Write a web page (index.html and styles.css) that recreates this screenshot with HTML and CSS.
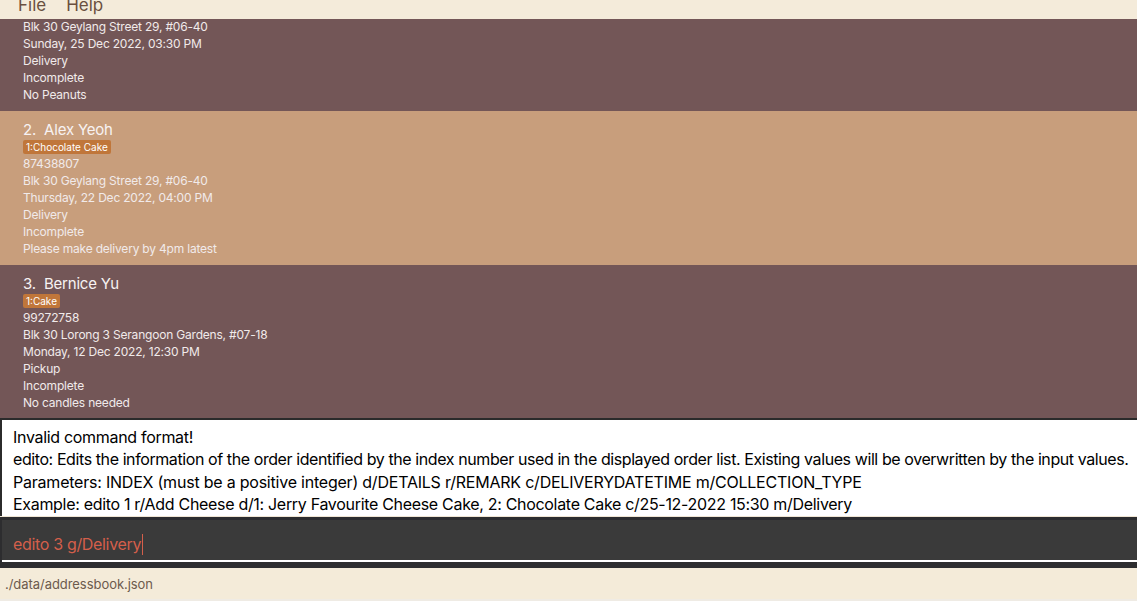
FILE: index.html
```html
<!DOCTYPE html>
<html>
<head>
<meta charset="utf-8">
<link rel="stylesheet" href="styles.css">
</head>
<body>
<div class="app">
  <div class="menubar">
    <span class="menu-item">File</span>
    <span class="menu-item">Help</span>
  </div>
  <div class="list">
    <div class="card odd first">
      <div class="line">Blk 30 Geylang Street 29, #06-40</div>
      <div class="line">Sunday, 25 Dec 2022, 03:30 PM</div>
      <div class="line">Delivery</div>
      <div class="line">Incomplete</div>
      <div class="line">No Peanuts</div>
    </div>
    <div class="card even">
      <div class="name">2.&nbsp; Alex Yeoh</div>
      <div class="tags"><span class="tag">1:Chocolate Cake</span></div>
      <div class="line">87438807</div>
      <div class="line">Blk 30 Geylang Street 29, #06-40</div>
      <div class="line">Thursday, 22 Dec 2022, 04:00 PM</div>
      <div class="line">Delivery</div>
      <div class="line">Incomplete</div>
      <div class="line">Please make delivery by 4pm latest</div>
    </div>
    <div class="card odd">
      <div class="name">3.&nbsp; Bernice Yu</div>
      <div class="tags"><span class="tag">1:Cake</span></div>
      <div class="line">99272758</div>
      <div class="line">Blk 30 Lorong 3 Serangoon Gardens, #07-18</div>
      <div class="line">Monday, 12 Dec 2022, 12:30 PM</div>
      <div class="line">Pickup</div>
      <div class="line">Incomplete</div>
      <div class="line">No candles needed</div>
    </div>
  </div>
  <div class="result">
    <div class="result-inner">
      <div class="r-line">Invalid command format!</div>
      <div class="r-line r-usage">edito: Edits the information of the order identified by the index number used in the displayed order list. Existing values will be overwritten by the input values.</div>
      <div class="r-line r-params">Parameters: INDEX (must be a positive integer) d/DETAILS r/REMARK c/DELIVERYDATETIME m/COLLECTION_TYPE</div>
      <div class="r-line">Example: edito 1 r/Add Cheese d/1: Jerry Favourite Cheese Cake, 2: Chocolate Cake c/25-12-2022 15:30 m/Delivery</div>
    </div>
  </div>
  <div class="command">
    <div class="command-field"><span class="command-text">edito 3 g/Delivery</span><span class="caret"></span></div>
  </div>
  <div class="status">./data/addressbook.json</div>
  <div class="bottom-strip"></div>
</div>
</body>
</html>
```
FILE: styles.css
```css
html, body {
  margin: 0;
  padding: 0;
  width: 1137px;
  height: 601px;
  overflow: hidden;
  font-family: Inter, "Open Sans", sans-serif;
}
.app {
  display: flex;
  flex-direction: column;
  height: 601px;
}
.menubar {
  height: 19px;
  background: #f4ebda;
  overflow: hidden;
  display: flex;
  gap: 20px;
  padding-left: 18px;
  flex: none;
}
.menu-item {
  font-size: 17px;
  line-height: 20px;
  margin-top: -5px;
  color: #6a4f3f;
}
.list {
  height: 399px;
  overflow: hidden;
  flex: none;
}
.card {
  padding: 8px 10px 8px 23px;
  color: #f1eaea;
}
.card.first {
  padding-top: 0;
  margin-top: -1px;
}
.odd { background: #735657; }
.even { background: #c89e7c; }
.name {
  font-size: 15px;
  line-height: 20px;
  padding-top: 1px;
  margin-bottom: -1px;
  letter-spacing: -0.2px;
  color: #f7f2f2;
}
.tags {
  height: 16px;
  display: flex;
  align-items: center;
}
.tag {
  background: #c0763a;
  color: #fff;
  font-size: 10px;
  line-height: 14px;
  padding: 0 3px;
  border-radius: 2px;
}
.line {
  font-size: 12px;
  line-height: 17px;
  letter-spacing: -0.2px;
  white-space: nowrap;
}
.result {
  height: 98px;
  flex: none;
  background: #2b2b2b;
  padding-top: 2px;
  padding-left: 2px;
  box-sizing: border-box;
}
.result-inner {
  background: #ffffff;
  height: 96px;
  padding: 6px 0 0 11px;
  box-sizing: border-box;
  font-size: 16px;
  line-height: 22.4px;
  color: #000;
  white-space: nowrap;
  overflow: hidden;
}
.r-line {
  letter-spacing: -0.31px;
}
.r-line.r-usage {
  letter-spacing: -0.41px;
}
.r-line.r-params {
  letter-spacing: -0.22px;
}
.command {
  height: 52px;
  flex: none;
  background: #2d2d2f;
  border-top: 1px solid #f0e6d4;
  box-sizing: border-box;
  padding-top: 3px;
}
.command-field {
  height: 42px;
  background: #3a3a3a;
  border-bottom: 2px solid #ffffff;
  margin-left: 2px;
  display: flex;
  align-items: center;
  padding-left: 11px;
  padding-top: 8px;
  box-sizing: border-box;
}
.command-text {
  font-size: 16px;
  letter-spacing: -0.33px;
  color: #d45f4b;
}
.caret {
  width: 1px;
  height: 21px;
  background: #d45f4b;
  margin-left: 1px;
}
.status {
  height: 31px;
  flex: none;
  background: #f4ebd9;
  color: #6c5a4d;
  font-size: 13px;
  line-height: 32px;
  letter-spacing: -0.05px;
  padding-left: 5px;
}
.bottom-strip {
  flex: 1;
  background: #efebe4;
}
```
